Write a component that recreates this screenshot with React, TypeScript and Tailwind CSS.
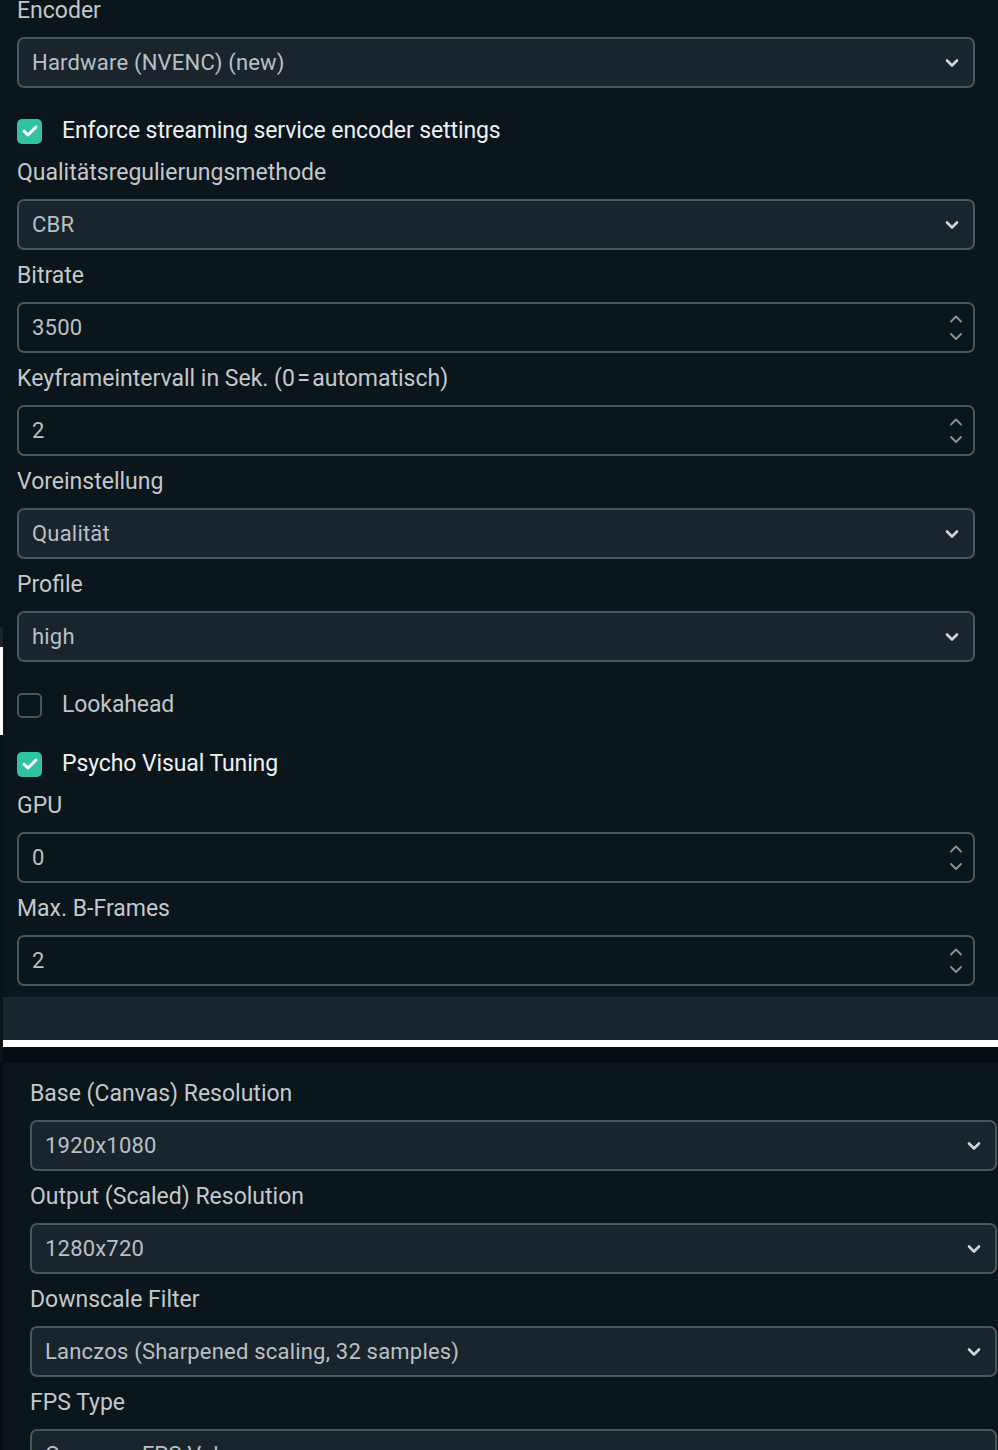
import { ReactNode } from 'react'

type Field =
  | { kind: 'select'; label: string; value: string }
  | { kind: 'number'; label: string; value: string }
  | { kind: 'check'; label: string; checked: boolean }

const encoderFields: Field[] = [
  { kind: 'select', label: 'Encoder', value: 'Hardware (NVENC) (new)' },
  { kind: 'check', label: 'Enforce streaming service encoder settings', checked: true },
  { kind: 'select', label: 'Qualitätsregulierungsmethode', value: 'CBR' },
  { kind: 'number', label: 'Bitrate', value: '3500' },
  { kind: 'number', label: 'Keyframeintervall in Sek. (0\u200a=\u200aautomatisch)', value: '2' },
  { kind: 'select', label: 'Voreinstellung', value: 'Qualität' },
  { kind: 'select', label: 'Profile', value: 'high' },
  { kind: 'check', label: 'Lookahead', checked: false },
  { kind: 'check', label: 'Psycho Visual Tuning', checked: true },
  { kind: 'number', label: 'GPU', value: '0' },
  { kind: 'number', label: 'Max. B-Frames', value: '2' },
]

const videoFields: Field[] = [
  { kind: 'select', label: 'Base (Canvas) Resolution', value: '1920x1080' },
  { kind: 'select', label: 'Output (Scaled) Resolution', value: '1280x720' },
  { kind: 'select', label: 'Downscale Filter', value: 'Lanczos (Sharpened scaling, 32 samples)' },
  { kind: 'select', label: 'FPS Type', value: 'Common FPS Values' },
]

function ChevronDown() {
  return (
    <svg width="14" height="10" viewBox="0 0 14 10" fill="none">
      <path d="M2 2.5l5 5 5-5" stroke="#cfd4d7" strokeWidth="2.6" strokeLinecap="round" strokeLinejoin="round" />
    </svg>
  )
}

function Spinner() {
  return (
    <svg width="14" height="30" viewBox="0 0 14 30" fill="none">
      <path d="M2 8.5l5-5 5 5" stroke="#8c9499" strokeWidth="1.8" strokeLinecap="round" strokeLinejoin="round" />
      <path d="M2 21l5 5 5-5" stroke="#8c9499" strokeWidth="1.8" strokeLinecap="round" strokeLinejoin="round" />
    </svg>
  )
}

function Label({ children }: { children: ReactNode }) {
  return <div className="h-[30px] leading-[30px] text-[23px] text-[#c3c8cb] whitespace-pre">{children}</div>
}

function Box({ value, spinner }: { value: string; spinner?: boolean }) {
  return (
    <div
      className={`flex items-center justify-between h-[51px] rounded-[7px] border-2 border-[#4a555c] pl-[13px] text-[22px] tracking-[0.2px] text-[#b9c0c4] ${
        spinner ? 'bg-[#0b151c] pr-[10px]' : 'bg-[#1a242c] pr-[14px]'
      }`}
    >
      <span className="truncate">{value}</span>
      {spinner ? <Spinner /> : <ChevronDown />}
    </div>
  )
}

function Checkbox({ label, checked }: { label: string; checked: boolean }) {
  return (
    <div className="flex items-center gap-[20px] h-[59px] pt-[5px]">
      {checked ? (
        <div className="w-[25px] h-[25px] rounded-[5px] bg-[#31c3a1] flex items-center justify-center">
          <svg width="16" height="12" viewBox="0 0 16 12" fill="none">
            <path d="M2 6.2l4 3.8 8-8" stroke="white" strokeWidth="3" strokeLinecap="round" strokeLinejoin="round" />
          </svg>
        </div>
      ) : (
        <div className="w-[25px] h-[25px] rounded-[5px] border-2 border-[#4a555c]" />
      )}
      <span className={`text-[23px] tracking-[-0.1px] ${checked ? 'text-[#eef0f1]' : 'text-[#bfc5c8]'}`}>{label}</span>
    </div>
  )
}

function FieldList({ fields }: { fields: Field[] }) {
  return (
    <div className="flex flex-col">
      {fields.map((f) =>
        f.kind === 'check' ? (
          <Checkbox key={f.label} label={f.label} checked={f.checked} />
        ) : (
          <div key={f.label} className="flex flex-col gap-[11px] pb-[11px]">
            <Label>{f.label}</Label>
            <Box value={f.value} spinner={f.kind === 'number'} />
          </div>
        )
      )}
    </div>
  )
}

export default function App() {
  return (
    <div className="flex w-[998px] h-[1450px] overflow-hidden bg-[#0b151c] font-[Roboto,sans-serif]">
      {/* left gutter left over from the stitched captures */}
      <div className="flex flex-col w-[3px] shrink-0">
        <div className="h-[627px] bg-[#0b151c]" />
        <div className="h-[20px] bg-[#1c232a]" />
        <div className="h-[88px] bg-white" />
        <div className="h-[328px] bg-[#0a1318]" />
        <div className="flex-1 bg-[#060d12]" />
      </div>

      <div className="flex flex-col flex-1 min-w-0">
        {/* Encoder settings */}
        <div className="h-[997px] overflow-hidden pl-[14px] pr-[23px]">
          <div className="-mt-[4px]">
            <FieldList fields={encoderFields} />
          </div>
        </div>

        <div className="h-[43px] bg-[#1b252d]" />
        <div className="h-[7px] bg-white" />
        <div className="h-[16px] bg-[#060d12]" />

        {/* Video settings */}
        <div className="flex-1 overflow-hidden pl-[27px] pr-[1px] pt-[16px]">
          <FieldList fields={videoFields} />
        </div>
      </div>
    </div>
  )
}
